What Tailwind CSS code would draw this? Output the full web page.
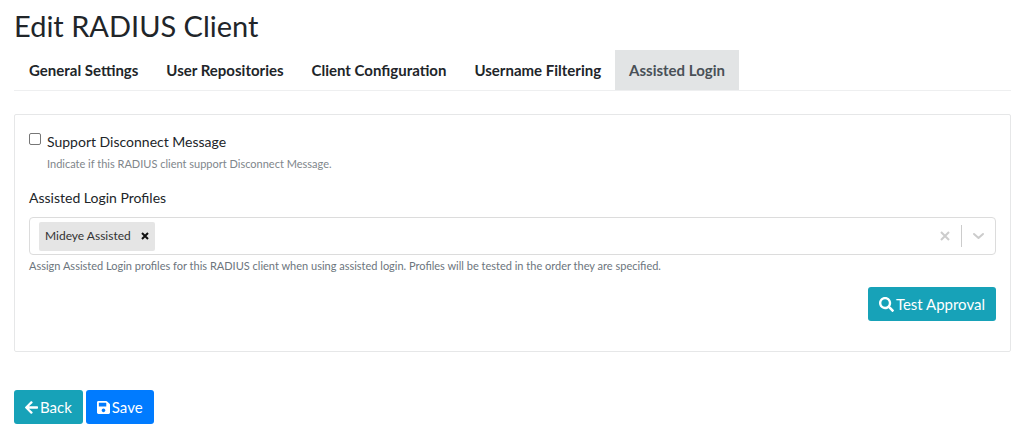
<!DOCTYPE html>
<html lang="en">
<head>
    <meta charset="UTF-8">
    <meta name="viewport" content="width=device-width, initial-scale=1.0">
    <title>Edit RADIUS Client</title>
    <script src="https://cdn.jsdelivr.net/npm/@tailwindcss/browser@4"></script>
</head>
<body class="bg-white font-['Lato',sans-serif] text-[15px] leading-6 text-[#212529]">

    <main class="pl-[14px] pr-[13px] pt-2 pb-2">
        <h1 class="text-[29px] leading-9 mb-[6px]">Edit RADIUS Client</h1>

        <!-- Tabs -->
        <nav class="flex pl-px border-b border-[#eeeff0] font-bold" aria-label="Client sections">
            <a href="#general" class="px-[14px] py-2">General Settings</a>
            <a href="#repositories" class="px-[14px] py-2">User Repositories</a>
            <a href="#configuration" class="px-[14px] py-2">Client Configuration</a>
            <a href="#filtering" class="px-[14px] py-2">Username Filtering</a>
            <a href="#assisted" class="px-[14px] py-2 bg-[#e2e4e5] text-[#495057]" aria-current="page">Assisted Login</a>
        </nav>

        <form>
            <section class="mt-[23px] border border-[#e6e7e8] rounded-xs px-[14px] pt-[15px] pb-[30px]">
                <div class="flex items-start gap-[6px]">
                    <input type="checkbox" id="disconnect" class="appearance-none size-3 mt-[3px] bg-white border border-[#767676] rounded-xs checked:bg-[#007bff]">
                    <div>
                        <label for="disconnect" class="block text-sm leading-6">Support Disconnect Message</label>
                        <p class="text-[11px] leading-5 text-[#80868b]">Indicate if this RADIUS client support Disconnect Message.</p>
                    </div>
                </div>

                <label for="profiles" class="block mt-3 text-sm leading-6">Assisted Login Profiles</label>
                <div class="mt-[7px] flex items-center h-[38px] border border-[#dcdcdc] rounded pl-[9px]">
                    <div class="flex items-center h-[29px] bg-[#e5e5e5] rounded-xs text-xs text-[#333333]">
                        <span class="pl-[6px] pr-1">Mideye Assisted</span>
                        <button type="button" class="px-[6px]" aria-label="Remove Mideye Assisted">
                            <svg class="size-2" viewBox="0 0 8 8" fill="none" stroke="#111111" stroke-width="2"><path d="M1 1l6 6M7 1L1 7"/></svg>
                        </button>
                    </div>
                    <input type="text" id="profiles" role="combobox" aria-expanded="false" class="flex-1 min-w-0 h-7 px-1 outline-none">
                    <button type="button" class="px-[11px]" aria-label="Clear all">
                        <svg class="size-[10px]" viewBox="0 0 10 10" fill="none" stroke="#cccccc" stroke-width="2"><path d="M1 1l8 8M9 1L1 9"/></svg>
                    </button>
                    <span class="w-px h-[22px] bg-[#cccccc]"></span>
                    <button type="button" class="px-[10px]" aria-label="Show profiles">
                        <svg class="w-[13px] h-2" viewBox="0 0 13 8" fill="none" stroke="#cccccc" stroke-width="2" stroke-linecap="round" stroke-linejoin="round"><path d="M2 2l4.500 4 4.500-4"/></svg>
                    </button>
                </div>
                <p class="mt-[1px] text-[11px] leading-5 text-[#6c757d]">Assign Assisted Login profiles for this RADIUS client when using assisted login. Profiles will be tested in the order they are specified.</p>

                <div class="flex justify-end mt-[11px]">
                    <button type="button" class="flex items-center gap-[2px] h-[34px] px-[11px] rounded-[3px] bg-[#17a2b8] text-white">
                        <svg class="size-[15px]" viewBox="0 0 512 512" fill="currentColor"><path d="M505 442.700L405.300 343c-4.500-4.500-10.600-7-17-7H372c27.600-35.300 44-79.700 44-128C416 93.100 322.900 0 208 0S0 93.100 0 208s93.100 208 208 208c48.300 0 92.700-16.400 128-44v16.300c0 6.400 2.500 12.500 7 17l99.700 99.700c9.400 9.400 24.600 9.400 33.900 0l28.300-28.300c9.400-9.400 9.400-24.600.1-34zM208 336c-70.700 0-128-57.200-128-128 0-70.700 57.200-128 128-128 70.700 0 128 57.200 128 128 0 70.700-57.200 128-128 128z"/></svg>
                        Test Approval
                    </button>
                </div>
            </section>

            <div class="flex gap-[3px] mt-[38px]">
                <button type="button" class="flex items-center gap-[2px] h-[34px] px-[11px] rounded-[3px] bg-[#17a2b8] text-white">
                    <svg class="w-[13px] h-[15px]" viewBox="0 0 448 512" fill="currentColor"><path d="M257.500 445.100l-22.200 22.200c-9.400 9.400-24.600 9.400-33.900 0L7 273c-9.400-9.400-9.400-24.600 0-33.900L201.400 44.700c9.400-9.400 24.600-9.400 33.900 0l22.200 22.200c9.500 9.500 9.300 25-.4 34.300L136.600 216H424c13.300 0 24 10.700 24 24v32c0 13.300-10.700 24-24 24H136.600l120.500 114.800c9.800 9.300 10 24.800.4 34.300z"/></svg>
                    Back
                </button>
                <button type="submit" class="flex items-center gap-[2px] h-[34px] px-[11px] rounded-[3px] bg-[#007bff] text-white">
                    <svg class="w-[13px] h-[15px]" viewBox="0 0 448 512" fill="currentColor"><path d="M433.900 129.900l-83.900-83.900A48 48 0 0 0 316.100 32H48C21.500 32 0 53.500 0 80v352c0 26.500 21.500 48 48 48h352c26.500 0 48-21.500 48-48V163.900a48 48 0 0 0-14.100-34zM224 416c-35.300 0-64-28.700-64-64s28.700-64 64-64 64 28.700 64 64-28.700 64-64 64zm96-304.500V212c0 6.600-5.400 12-12 12H76c-6.600 0-12-5.400-12-12V108c0-6.600 5.400-12 12-12h228.500c3.200 0 6.200 1.300 8.500 3.500l3.500 3.500c2.200 2.300 3.500 5.300 3.500 8.500z"/></svg>
                    Save
                </button>
            </div>
        </form>
    </main>

</body>
</html>
